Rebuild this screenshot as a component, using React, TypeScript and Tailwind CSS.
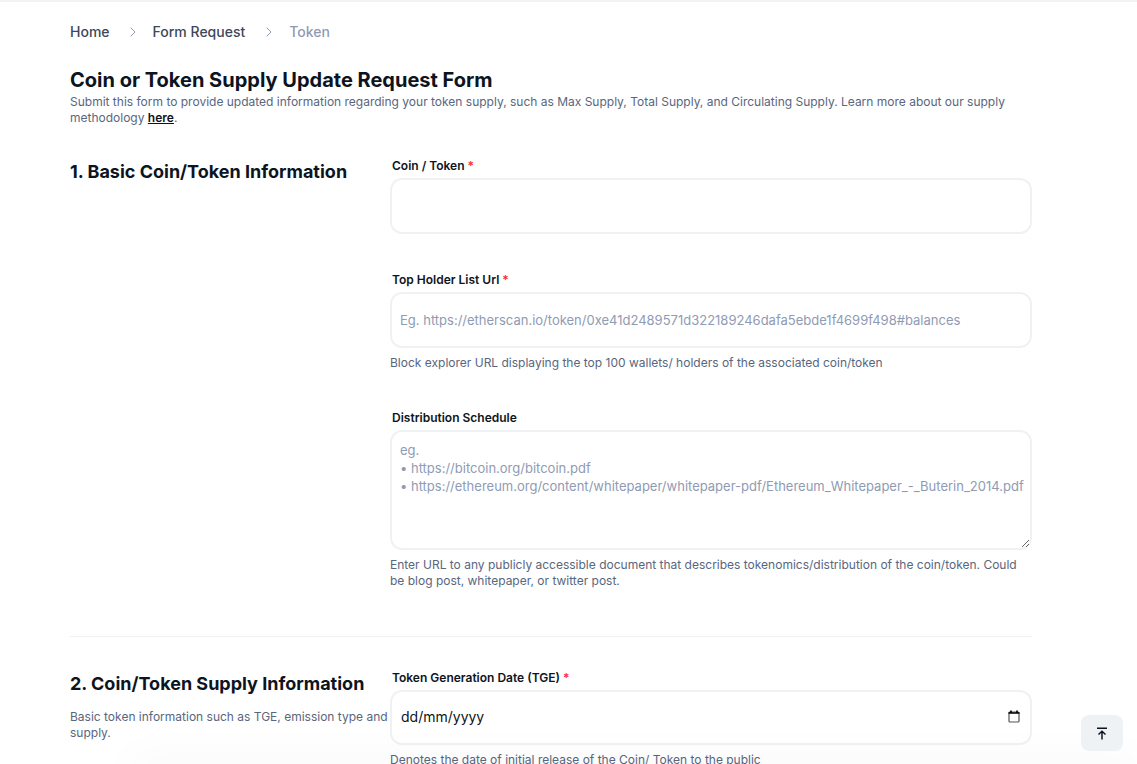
import { ChevronRight } from 'lucide-react';

const inputClass =
  'block w-full h-[56px] rounded-xl border-2 border-[#eff2f5] bg-white px-2 text-[13px] text-[#0d1421] outline-none placeholder:text-[#8f9bb3]';

function Label({ text, required }: { text: string; required?: boolean }) {
  return (
    <label className="block pl-0.5 mb-[3px] text-xs leading-[18px] font-semibold text-[#0d1421]">
      {text}
      {required && <span className="text-red-500"> *</span>}
    </label>
  );
}

function Help({ children }: { children: React.ReactNode }) {
  return <p className="mt-[7px] text-xs leading-[16px] text-[#58667e]">{children}</p>;
}

export default function App() {
  return (
    <div
      className="relative h-screen overflow-hidden bg-white border-t-2 border-[#f1f3f6] antialiased"
      style={{ fontFamily: 'Inter, sans-serif' }}
    >
      <div className="w-[962px] ml-[70px]">
        <nav className="flex items-center h-5 mt-[20px] text-sm font-medium text-[#3d4759]">
          <span>Home</span>
          <ChevronRight size={16} strokeWidth={1.5} className="ml-[15px] mr-[12px] text-[#8f9bb3]" />
          <span>Form Request</span>
          <ChevronRight size={16} strokeWidth={1.5} className="ml-[16px] mr-[12px] text-[#8f9bb3]" />
          <span className="text-[#8f9bb3]">Token</span>
        </nav>

        <h1 className="mt-[24px] text-xl leading-7 font-bold text-[#0d1421]">
          Coin or Token Supply Update Request Form
        </h1>
        <p className="text-xs leading-[16px] text-[#58667e]">
          Submit this form to provide updated information regarding your token supply, such as Max
          Supply, Total Supply, and Circulating Supply. Learn more about our supply methodology{' '}
          <a className="font-semibold underline text-[#0d1421]">here</a>.
        </p>

        <section className="flex mt-[31px] pb-[47px] border-b border-[#eff2f5]">
          <div className="w-[320px] shrink-0">
            <h2 className="mt-[1px] text-lg leading-7 font-bold text-[#0d1421]">
              1. Basic Coin/Token Information
            </h2>
          </div>
          <div className="flex-1">
            <Label text="Coin / Token" required />
            <input className={inputClass} />

            <div className="mt-[37px]">
              <Label text="Top Holder List Url" required />
              <input
                className={inputClass}
                placeholder="Eg. https://etherscan.io/token/0xe41d2489571d322189246dafa5ebde1f4699f498#balances"
              />
              <Help>Block explorer URL displaying the top 100 wallets/ holders of the associated coin/token</Help>
            </div>

            <div className="mt-[38px]">
              <Label text="Distribution Schedule" />
              <textarea
                className="block w-full h-[120px] rounded-xl border-2 border-[#eff2f5] bg-white pl-2 pr-1 pt-[9px] pb-2 text-[13px] leading-[18px] outline-none placeholder:text-[#8f9bb3]"
                placeholder={
                  'eg.\n• https://bitcoin.org/bitcoin.pdf\n• https://ethereum.org/content/whitepaper/whitepaper-pdf/Ethereum_Whitepaper_-_Buterin_2014.pdf'
                }
              />
              <Help>
                Enter URL to any publicly accessible document that describes tokenomics/distribution of
                the coin/token. Could be blog post, whitepaper, or twitter post.
              </Help>
            </div>
          </div>
        </section>

        <section className="flex mt-[32px]">
          <div className="w-[320px] shrink-0">
            <h2 className="mt-[1px] text-lg leading-7 font-bold text-[#0d1421]">
              2. Coin/Token Supply Information
            </h2>
            <p className="mt-[11px] text-xs leading-[16px] text-[#58667e]">
              Basic token information such as TGE, emission type and supply.
            </p>
          </div>
          <div className="flex-1">
            <Label text="Token Generation Date (TGE)" required />
            <div className="flex items-center justify-between h-[55px] rounded-xl border-2 border-[#eff2f5] bg-white pl-[9px] pr-[10px] pb-[2px] text-sm text-[#0d1421]">
              <span>dd/mm/yyyy</span>
              <svg width="12" height="13" viewBox="0 0 12 13" fill="none">
                <rect x="1" y="2" width="10" height="10" rx="1" stroke="#555" strokeWidth="1.2" />
                <path d="M0.5 3h11M3 0.5v2M9 0.5v2" stroke="#000" strokeWidth="1.6" />
              </svg>
            </div>
            <Help>Denotes the date of initial release of the Coin/ Token to the public</Help>
          </div>
        </section>
      </div>

      <div className="absolute -bottom-[10px] left-[130px] right-0 h-[10px] shadow-[0_0_40px_rgba(0,0,0,0.08)] pointer-events-none" />

      <button className="absolute right-[14px] bottom-[13px] flex items-center justify-center w-[42px] h-9 rounded-lg bg-[#eff2f5]">
        <svg width="12" height="13" viewBox="0 0 12 13" fill="none" stroke="#0d1421" strokeWidth="1.5">
          <path d="M1 1.2h10M6 12.5V4.5M2.5 7.5 6 4.2l3.5 3.3" />
        </svg>
      </button>
    </div>
  );
}
